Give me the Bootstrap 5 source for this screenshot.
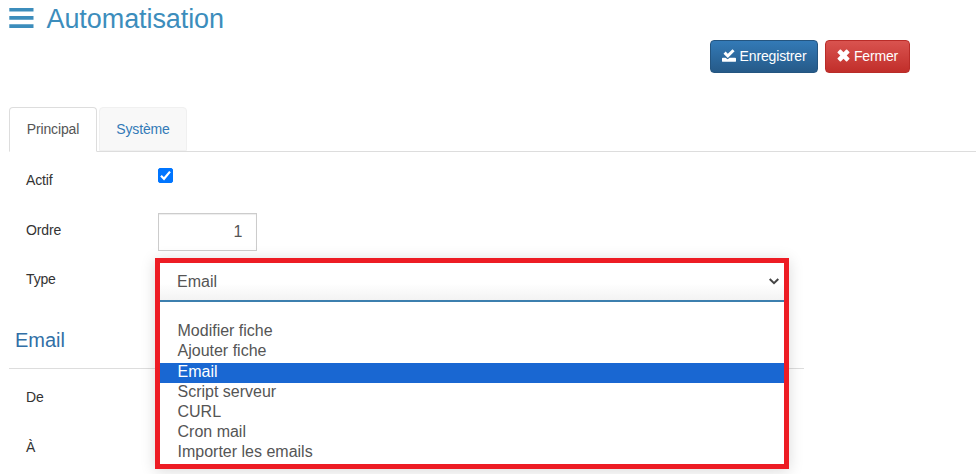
<!DOCTYPE html>
<html lang="fr">
<head>
<meta charset="utf-8">
<meta name="viewport" content="width=device-width, initial-scale=1">
<title>Automatisation</title>
<link href="https://cdn.jsdelivr.net/npm/bootstrap@5.3.0/dist/css/bootstrap.min.css" rel="stylesheet">
<style>
body{font-family:"Liberation Sans",Arial,sans-serif;font-size:14px;line-height:20px;color:#333;height:474px;overflow:hidden;background:#fff}
.page-head{height:38px;padding-left:9px;color:#3c8dbc}
.page-head h1{font-size:27px;line-height:38px;letter-spacing:-.08px}
.page-head svg{margin-right:12.5px}
.toolbar{height:69px;padding:2px 66px 0 0;gap:7px}
.toolbar .btn{height:33px;font-size:14px;line-height:20px;padding:0 0 2px;border-radius:4px;color:#fff;letter-spacing:-.15px}
.btn-save{width:108px;background:linear-gradient(#337ab7,#265a88);border-color:#245580}
.btn-close-form{width:85px;background:linear-gradient(#d9534f,#c12e2a);border-color:#b92c28}
.nav-tabs{margin-left:9px;border-bottom:1px solid #ddd;height:45px;gap:2px}
.nav-tabs .nav-link{height:45px;width:88px;padding:11px 0;text-align:center;border-radius:4px 4px 0 0;color:#337ab7;letter-spacing:-.15px}
.nav-tabs .nav-link.active{color:#555;border-color:#ddd #ddd #fff}
.nav-tabs .nav-link.idle{height:44px;background:#f8f8f8;border-color:#f0f0f0}
.form-line{padding-left:26px}
.form-line label{width:132px;letter-spacing:-.15px}
.line-check{height:61px;padding-top:18px}
.line-check .form-check-input{width:15px;height:15px;margin:-2px 0 0;border-radius:2px}
.line-check .form-check-input:checked{background-color:#0075ff;border-color:#0075ff;background-size:15px;background-image:url("data:image/svg+xml,%3Csvg xmlns='http://www.w3.org/2000/svg' viewBox='0 0 15 15'%3E%3Cpath fill='none' stroke='white' stroke-width='2.2' d='M3 7.8l3 3L12 3.6'/%3E%3C/svg%3E")}
.line-order{height:45px}
.line-order label{padding-top:7px}
.line-order .form-control{width:99px;height:38px;border:1px solid #ccc;border-radius:0;font-size:16px;color:#555;padding:0 13.5px;text-align:right;box-shadow:inset 0 1px 1px rgba(0,0,0,.075)}
.line-type{height:57px}
.line-type label{padding-top:11px}
.select-open{position:absolute;left:155px;top:0;width:634px;height:211px;border:5px solid #ed1c24;background:#fff;font-size:16px;color:#555;z-index:2;box-shadow:0 2px 14px rgba(0,0,0,.15)}
.select-value{height:39px;padding:0 5px 0 17px;border-bottom:2px solid #3c7fae;background:linear-gradient(#fff 55%,#f3f3f3)}
.options{padding-top:19px}
.options li{height:20px;line-height:20px;padding-left:17.5px}
.options .chosen{background:#1967d2;color:#fff;line-height:18px;margin-top:2px;margin-bottom:-1px}
.section-title{margin-left:9px;width:795px;height:54px;padding:13px 6px 0;border-bottom:1px solid #ddd}
.section-title h2{font-size:20px;line-height:24px;color:#316fa6}
.line-from{height:50px;padding-top:18px}
.line-to{padding-top:18px}
</style>
<script src="https://cdn.jsdelivr.net/npm/bootstrap@5.3.0/dist/js/bootstrap.bundle.min.js"></script>
</head>
<body>
<header class="page-head d-flex align-items-center">
  <svg width="25" height="22" viewBox="0 0 25 22" fill="currentColor" aria-hidden="true"><path d="M.3-.2h24.2v3.7H.3zM.3 8h24.2v3.7H.3zM.3 16.3h24.2V20H.3z"/></svg>
  <h1 class="m-0 fw-normal">Automatisation</h1>
</header>
<div class="toolbar d-flex justify-content-end">
  <button type="button" class="btn btn-save d-flex align-items-center justify-content-center">
    <svg class="me-1" width="14" height="13" viewBox="0 0 14 13" fill="#fff" aria-hidden="true"><path d="M.9 8.7h2.6l2.2 1.6 2-1.6h5.4q.9 0 .9.9v2.3q0 .9-.9.9H.9q-.9 0-.9-.9V9.600q0-.9.9-.9zM1.500 4.700 3.600 2.600l2.200 2.200L10.500.2l2.100 2.100-6.800 6.700z"/></svg>
    <span>Enregistrer</span>
  </button>
  <button type="button" class="btn btn-close-form d-flex align-items-center justify-content-center">
    <svg class="me-1" width="13" height="13" viewBox="0 0 13 13" fill="#fff" aria-hidden="true"><path d="M.6 3 3 .6q.4-.4.8 0l2.700 2.700L9.200.6q.4-.4.8 0L12.400 3q.4.4 0 .8L9.700 6.500l2.700 2.700q.4.4 0 .8L10 12.400q-.4.4-.8 0L6.500 9.700l-2.700 2.700q-.4.4-.8 0L.6 10q-.4-.4 0-.8l2.700-2.700L.6 3.800q-.4-.4 0-.8z"/></svg>
    <span>Fermer</span>
  </button>
</div>
<ul class="nav nav-tabs">
  <li class="nav-item"><a class="nav-link active" href="#">Principal</a></li>
  <li class="nav-item"><a class="nav-link idle" href="#">Système</a></li>
</ul>
<form>
  <div class="form-line line-check d-flex align-items-start"><label for="actif">Actif</label><input class="form-check-input" type="checkbox" id="actif" checked></div>
  <div class="form-line line-order d-flex align-items-start"><label for="ordre">Ordre</label><input class="form-control" id="ordre" value="1"></div>
  <div class="form-line line-type d-flex align-items-start position-relative">
    <label>Type</label>
    <div class="select-open">
      <div class="select-value d-flex align-items-center justify-content-between">
        <span>Email</span>
        <svg width="10" height="7" viewBox="0 0 10 7" fill="none" stroke="#444" stroke-width="2" aria-hidden="true"><path d="m.7 1 4.300 4.200L9.300 1"/></svg>
      </div>
      <ul class="options list-unstyled m-0">
        <li>Modifier fiche</li>
        <li>Ajouter fiche</li>
        <li class="chosen">Email</li>
        <li>Script serveur</li>
        <li>CURL</li>
        <li>Cron mail</li>
        <li>Importer les emails</li>
      </ul>
    </div>
  </div>
  <div class="section-title"><h2 class="m-0 fw-normal">Email</h2></div>
  <div class="form-line line-from"><label>De</label></div>
  <div class="form-line line-to"><label>À</label></div>
</form>
</body>
</html>
